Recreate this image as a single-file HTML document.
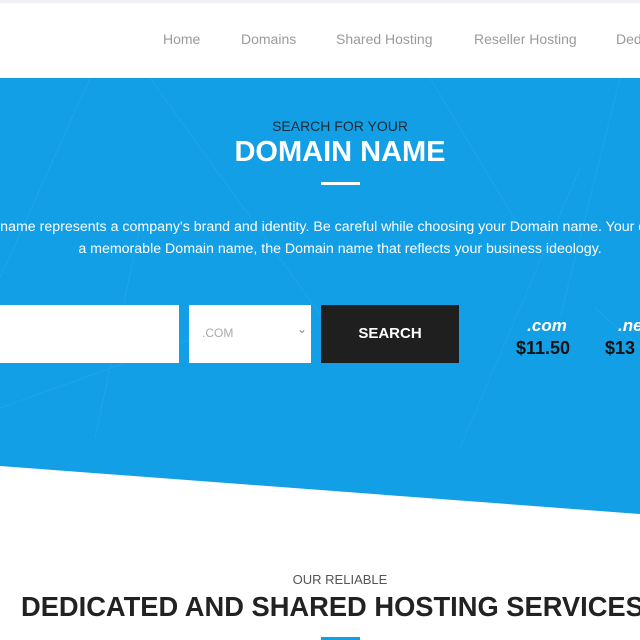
<!DOCTYPE html><html><head><style>
html,body{margin:0;width:640px;height:640px;overflow:hidden}
body{background:#fff;font-family:"Liberation Sans",sans-serif;position:relative}
.t{position:absolute;white-space:nowrap}
</style></head><body>
<div style="position:absolute;left:0;top:0;width:640px;height:3px;background:#eef0f3"></div>
<div class="t" style="top:31px;left:163px;font-size:14px;color:#9a9a9a">Home</div>
<div class="t" style="top:31px;left:241px;font-size:14px;color:#9a9a9a">Domains</div>
<div class="t" style="top:31px;left:336px;font-size:14px;color:#9a9a9a">Shared Hosting</div>
<div class="t" style="top:31px;left:474px;font-size:14px;color:#9a9a9a">Reseller Hosting</div>
<div class="t" style="top:31px;left:616px;width:24px;overflow:hidden;font-size:14px;color:#9a9a9a">Dedicated</div>
<svg style="position:absolute;left:0;top:78px" width="640" height="440">
<polygon points="0,0 640,0 640,436 0,388" fill="#139fe5"/>
<g stroke="#2aa8e8" stroke-width="1" fill="none" opacity=".6">
<line x1="90" y1="0" x2="0" y2="200"/><line x1="150" y1="0" x2="330" y2="250"/><line x1="0" y1="330" x2="250" y2="240"/><line x1="95" y1="360" x2="140" y2="150"/><line x1="430" y1="0" x2="520" y2="150"/><line x1="620" y1="0" x2="560" y2="240"/><line x1="460" y1="370" x2="580" y2="90"/><line x1="595" y1="230" x2="640" y2="270"/>
</g></svg>
<div class="t" style="top:118px;left:0;width:680px;text-align:center;font-size:14px;color:#1c2a36">SEARCH FOR YOUR</div>
<div class="t" style="top:136px;left:0;width:680px;text-align:center;font-size:29px;font-weight:bold;color:#fff">DOMAIN NAME</div>
<div style="position:absolute;top:182px;left:321px;width:39px;height:3px;background:#fff"></div>
<div style="position:absolute;top:0;left:0;width:640px;height:640px;overflow:hidden">
<div class="t" style="top:216px;left:-330px;width:1340px;text-align:center;font-size:14.2px;color:#fff;line-height:22px">Your Domain name represents a company's brand and identity. Be careful while choosing your Domain name. Your company must have<br>a memorable Domain name, the Domain name that reflects your business ideology.</div>
</div>
<div style="position:absolute;top:305px;left:0;width:179px;height:58px;background:#fff"></div>
<div style="position:absolute;top:305px;left:189px;width:122px;height:58px;background:#fff"></div>
<div class="t" style="top:326px;left:202px;font-size:12px;color:#aaa">.COM</div>
<div class="t" style="top:322px;left:297px;font-size:12px;color:#888">&#8964;</div>
<div style="position:absolute;top:305px;left:321px;width:138px;height:58px;background:#1f1f1f;color:#fff;font-weight:bold;font-size:15px;text-align:center;line-height:58px">SEARCH</div>
<div class="t" style="top:316px;left:516px;width:62px;text-align:center;font-size:17px;font-weight:bold;font-style:italic;color:#fff">.com</div>
<div class="t" style="top:338px;left:516px;font-size:18px;font-weight:bold;color:#111">$11.50</div>
<div class="t" style="top:316px;left:618px;font-size:17px;font-weight:bold;font-style:italic;color:#fff">.ne</div>
<div class="t" style="top:338px;left:605px;font-size:18px;font-weight:bold;color:#111">$13</div>
<div class="t" style="top:572px;left:0;width:680px;text-align:center;font-size:13px;color:#555">OUR RELIABLE</div>
<div class="t" style="top:591px;left:21px;width:619px;overflow:hidden;font-size:27.3px;font-weight:bold;color:#222">DEDICATED AND SHARED HOSTING SERVICES</div>
<div style="position:absolute;top:637px;left:321px;width:39px;height:3px;background:#139fe5"></div>
</body></html>
